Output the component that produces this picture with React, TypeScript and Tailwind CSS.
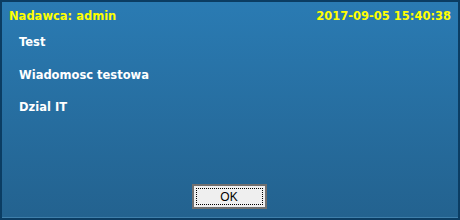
export default function App() {
  return (
    <div className="flex h-[220px] w-[460px] flex-col border-2 border-[#0b3d63] bg-gradient-to-b from-[#2a7bb3] to-[#23628f] font-['DejaVu_Sans',sans-serif] font-bold">
      <div className="flex items-center justify-between px-[7px] pt-[7px] text-[11.5px] leading-[15px] text-[#ffff00]">
        <span>Nadawca: admin</span>
        <span>2017-09-05 15:40:38</span>
      </div>
      <div className="flex flex-col gap-[17.5px] px-[17px] pt-[11px] text-[11.5px] leading-[15px] text-white">
        <span>Test</span>
        <span>Wiadomosc testowa</span>
        <span>Dzial IT</span>
      </div>
      <div className="mt-auto flex justify-center pb-[8px]">
        <button className="ml-[-2px] h-[25px] w-[75px] border-2 border-[#707070] bg-[#efefef] p-[2px]">
          <div className="flex h-full w-full items-center justify-center border border-dotted border-black font-['Liberation_Sans',sans-serif] text-[12px] font-normal text-black">
            OK
          </div>
        </button>
      </div>
      <div className="h-px bg-[#3f7fab]" />
    </div>
  );
}
